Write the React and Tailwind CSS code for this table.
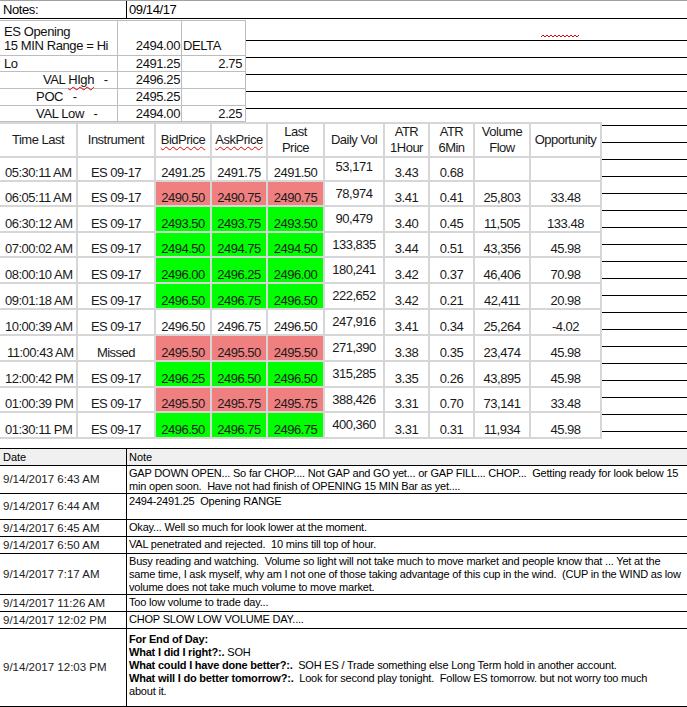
const mainCols = 'grid grid-cols-[78px_78px_56px_56px_57px_60px_45px_45px_56px_71px]'

const rows = [
  { h: 'h-[27px]', fill: '', v: ['05:30:11 AM', 'ES 09-17', '2491.25', '2491.75', '2491.50', '53,171', '3.43', '0.68', '', ''] },
  { h: 'h-[25px]', fill: 'red', v: ['06:05:11 AM', 'ES 09-17', '2490.50', '2490.75', '2490.75', '78,974', '3.41', '0.41', '25,803', '33.48'] },
  { h: 'h-[26px]', fill: 'green', v: ['06:30:12 AM', 'ES 09-17', '2493.50', '2493.75', '2493.50', '90,479', '3.40', '0.45', '11,505', '133.48'] },
  { h: 'h-[25px]', fill: 'green', v: ['07:00:02 AM', 'ES 09-17', '2494.50', '2494.75', '2494.50', '133,835', '3.44', '0.51', '43,356', '45.98'] },
  { h: 'h-[26px]', fill: 'green', v: ['08:00:10 AM', 'ES 09-17', '2496.00', '2496.25', '2496.00', '180,241', '3.42', '0.37', '46,406', '70.98'] },
  { h: 'h-[26px]', fill: 'green', v: ['09:01:18 AM', 'ES 09-17', '2496.50', '2496.75', '2496.50', '222,652', '3.42', '0.21', '42,411', '20.98'] },
  { h: 'h-[26px]', fill: '', v: ['10:00:39 AM', 'ES 09-17', '2496.50', '2496.75', '2496.50', '247,916', '3.41', '0.34', '25,264', '-4.02'] },
  { h: 'h-[26px]', fill: 'red', v: ['11:00:43 AM', 'Missed', '2495.50', '2495.50', '2495.50', '271,390', '3.38', '0.35', '23,474', '45.98'] },
  { h: 'h-[26px]', fill: 'green', v: ['12:00:42 PM', 'ES 09-17', '2496.25', '2496.50', '2496.50', '315,285', '3.35', '0.26', '43,895', '45.98'] },
  { h: 'h-[25px]', fill: 'red', v: ['01:00:39 PM', 'ES 09-17', '2495.50', '2495.75', '2495.75', '388,426', '3.31', '0.70', '73,141', '33.48'] },
  { h: 'h-[26px]', fill: 'green', v: ['01:30:11 PM', 'ES 09-17', '2496.50', '2496.75', '2496.75', '400,360', '3.31', '0.31', '11,934', '45.98'] },
]

const notes = [
  { h: 'h-[28px]', date: '9/14/2017 6:43 AM', lines: [
    'GAP DOWN OPEN... So far CHOP.... Not GAP and GO yet... or GAP FILL... CHOP...  Getting ready for look below 15',
    'min open soon.  Have not had finish of OPENING 15 MIN Bar as yet....',
  ] },
  { h: 'h-[26px]', date: '9/14/2017 6:44 AM', lines: ['2494-2491.25  Opening RANGE'] },
  { h: 'h-[17px]', date: '9/14/2017 6:45 AM', lines: ['Okay... Well so much for look lower at the moment.'] },
  { h: 'h-[17px]', date: '9/14/2017 6:50 AM', lines: ['VAL penetrated and rejected.  10 mins till top of hour.'] },
  { h: 'h-[41px]', date: '9/14/2017 7:17 AM', lines: [
    'Busy reading and watching.  Volume so light will not take much to move market and people know that ... Yet at the',
    'same time, I ask myself, why am I not one of those taking advantage of this cup in the wind.  (CUP in the WIND as low',
    'volume does not take much volume to move market.',
  ] },
  { h: 'h-[17px]', date: '9/14/2017 11:26 AM', lines: ['Too low volume to trade day...'] },
  { h: 'h-[17px]', date: '9/14/2017 12:02 PM', lines: ['CHOP SLOW LOW VOLUME DAY....'] },
]

function Cell({ children, className = '' }) {
  return <div className={`flex border-r-2 border-b-2 border-[#d6d6d6] leading-[15px] ${className}`}>{children}</div>
}

function EsRow({ h, label, value, extra }) {
  return (
    <div className={`flex ${h} border-b border-[#bdbdbd]`}>
      <div className="w-[118px] flex items-center border-r border-[#bdbdbd] pl-[4px] whitespace-pre">{label}</div>
      <div className="w-[64px] flex items-center justify-end border-r border-[#bdbdbd] pr-[1px]">{value}</div>
      <div className="w-[64px] flex items-center justify-end border-r border-[#bdbdbd] pr-[3px]">{extra}</div>
    </div>
  )
}

export default function App() {
  return (
    <div className="w-[687px] h-[707px] overflow-hidden bg-white text-black font-['Liberation_Sans',Arial,sans-serif]">
      {/* notes title row */}
      <div className="flex h-[19px] border-t border-[#a0a0a0] border-b border-b-black text-[13px] leading-[17px] tracking-[-0.4px]">
        <div className="w-[127px] border-r border-black pl-[3px]">Notes:</div>
        <div className="pl-[2px]">09/14/17</div>
      </div>

      {/* ruled page area */}
      <div className="relative h-[428px] bg-no-repeat [background-image:repeating-linear-gradient(to_bottom,#000_0_1px,transparent_1px_17px)] [background-position:0_20px]">
        <svg className="absolute left-[541px] top-[14px]" width="38" height="4" viewBox="0 0 38 4">
          <polyline points="0,3 2,1 4,3 6,1 8,3 10,1 12,3 14,1 16,3 18,1 20,3 22,1 24,3 26,1 28,3 30,1 32,3 34,1 36,3 38,1" fill="none" stroke="#e00000" strokeWidth="1" />
        </svg>

        <div className="mt-[1px] w-[246px] bg-white border-t border-[#bdbdbd] text-[13px] tracking-[-0.4px] text-[#111]">
          <div className="flex h-[35px] border-b border-[#bdbdbd]">
            <div className="w-[118px] flex flex-col justify-end pb-[2px] border-r border-[#bdbdbd] pl-[4px] leading-[14px]">
              <span>ES Opening</span>
              <span>15 MIN Range = Hi</span>
            </div>
            <div className="w-[64px] flex items-end pb-[2px] justify-end border-r border-[#bdbdbd] pr-[1px] leading-[14px]">2494.00</div>
            <div className="w-[64px] flex items-end pb-[2px] border-r border-[#bdbdbd] pl-[1px] leading-[14px]">DELTA</div>
          </div>
          <EsRow h="h-[16px]" label="Lo" value="2491.25" extra="2.75" />
          <div className="flex h-[17px] border-b border-[#bdbdbd]">
            <div className="w-[118px] flex items-center border-r border-[#bdbdbd] pl-[43px] whitespace-pre">
              <span>VAL </span>
              <span className="underline decoration-wavy decoration-[#e00000] decoration-1 underline-offset-[2px]">HIgh</span>
              <span>   -</span>
            </div>
            <div className="w-[64px] flex items-center justify-end border-r border-[#bdbdbd] pr-[1px]">2496.25</div>
            <div className="w-[64px] border-r border-[#bdbdbd]"></div>
          </div>
          <EsRow h="h-[17px]" label={'          POC   -'} value="2495.25" extra="" />
          <EsRow h="h-[16px]" label={'          VAL Low   -'} value="2494.00" extra="2.25" />
        </div>

        {/* trade table */}
        <div className="w-[602px] bg-white border-t-2 border-[#d6d6d6] text-[13px] tracking-[-0.5px] text-[#1a1a1a]">
          <div className={`${mainCols} h-[31px]`}>
            {[
              ['Time Last'],
              ['Instrument'],
              ['BidPrice', true],
              ['AskPrice', true],
              ['Last', 'Price'],
              ['Daily Vol'],
              ['ATR', '1Hour'],
              ['ATR', '6Min'],
              ['Volume', 'Flow'],
              ['Opportunity'],
            ].map(([a, b], i) => (
              <Cell key={i} className="flex-col items-center justify-center text-center leading-[16px]">
                {b === true ? (
                  <span className="underline decoration-wavy decoration-[#e00000] decoration-1 underline-offset-[2px]">{a}</span>
                ) : (
                  <>
                    <span>{a}</span>
                    {b && <span>{b}</span>}
                  </>
                )}
              </Cell>
            ))}
          </div>
          {rows.map((r, i) => {
            const fill = r.fill === 'red' ? 'bg-[#f08080]' : r.fill === 'green' ? 'bg-[#00ff00]' : ''
            const [time, inst, bid, ask, last, vol, atr1, atr6, flow, opp] = r.v
            return (
              <div key={i} className={`${mainCols} ${r.h}`}>
                <Cell className={`items-end whitespace-pre ${time.startsWith('11') ? 'pl-[7px]' : 'pl-[5px]'}`}>{time}</Cell>
                <Cell className="items-end justify-center">{inst}</Cell>
                <Cell className={`items-end justify-center ${fill}`}>{bid}</Cell>
                <Cell className={`items-end justify-center ${fill}`}>{ask}</Cell>
                <Cell className={`items-end justify-center ${fill}`}>{last}</Cell>
                <Cell className="items-start justify-center pt-[4px]">{vol}</Cell>
                <Cell className="items-end justify-center">{atr1}</Cell>
                <Cell className="items-end justify-center">{atr6}</Cell>
                <Cell className="items-end justify-center">{flow}</Cell>
                <Cell className="items-end justify-center">{opp}</Cell>
              </div>
            )
          })}
        </div>
      </div>

      {/* notes grid */}
      <div className="border-t border-black text-[11px] leading-[13px]">
        <div className="grid grid-cols-[127px_1fr] h-[17px] border-b border-black bg-[#f0f0f0]">
          <div className="border-r border-black pl-[3px] flex items-center">Date</div>
          <div className="pl-[2px] flex items-center">Note</div>
        </div>
        {notes.map((n, i) => (
          <div key={i} className={`grid grid-cols-[127px_1fr] ${n.h} border-b border-black`}>
            <div className="border-r border-black pl-[3px] flex items-center text-[11.5px] text-[#222]">{n.date}</div>
            <div className="pl-[2px] pt-[1px] tracking-[-0.2px] overflow-hidden">
              {n.lines.map((l, j) => (
                <div key={j} className="whitespace-pre">{l}</div>
              ))}
            </div>
          </div>
        ))}
        <div className="grid grid-cols-[127px_1fr] h-[78px] border-b border-black">
          <div className="border-r border-black pl-[3px] flex items-center text-[11.5px] text-[#222]">9/14/2017 12:03 PM</div>
          <div className="pl-[2px] pt-[4px] tracking-[-0.2px] overflow-hidden">
            <div className="font-bold">For End of Day:</div>
            <div className="whitespace-pre"><b>What I did I right?:.</b> SOH</div>
            <div className="whitespace-pre"><b>What could I have done better?:.</b>  SOH ES / Trade something else Long Term hold in another account.</div>
            <div className="whitespace-pre"><b>What will I do better tomorrow?:.</b>  Look for second play tonight.  Follow ES tomorrow. but not worry too much</div>
            <div>about it.</div>
          </div>
        </div>
        <div className="grid grid-cols-[127px_1fr] h-[10px]">
          <div className="border-r border-black"></div>
          <div></div>
        </div>
      </div>
    </div>
  )
}
